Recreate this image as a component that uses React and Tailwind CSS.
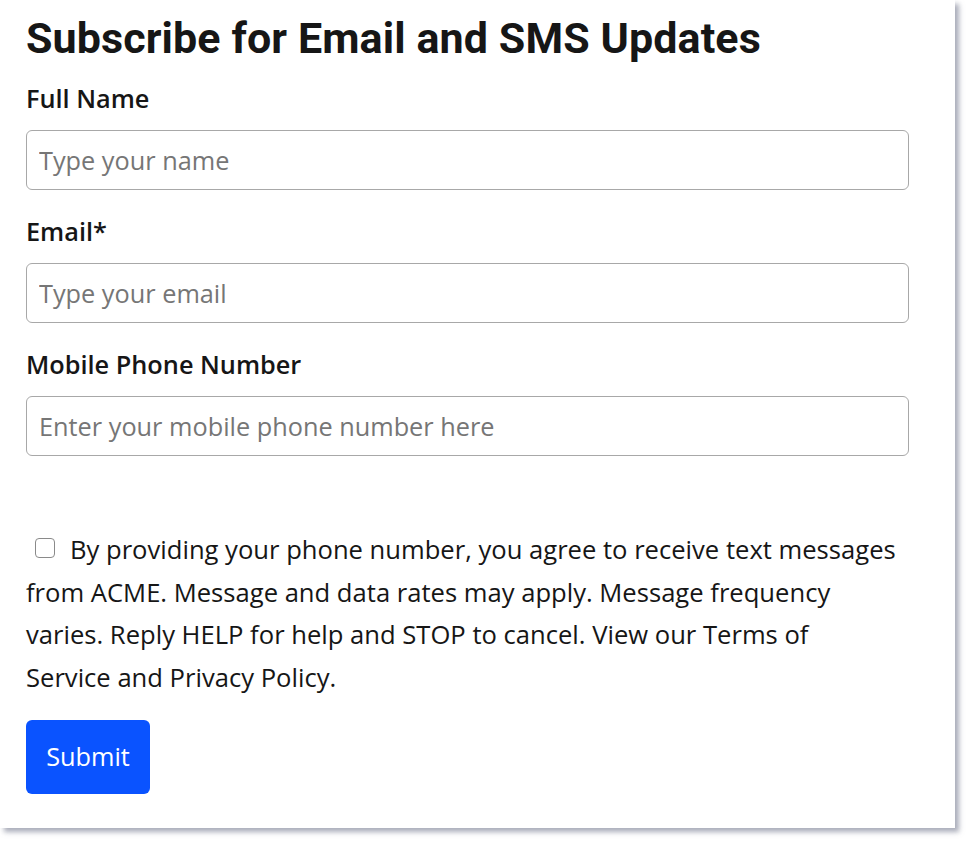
import React, { useState } from 'react';

const fields = [
  { id: 'full_name', label: 'Full Name', placeholder: 'Type your name', type: 'text' },
  { id: 'email', label: 'Email*', placeholder: 'Type your email', type: 'email' },
  { id: 'phone', label: 'Mobile Phone Number', placeholder: 'Enter your mobile phone number here', type: 'tel' },
];

export default function App() {
  const [form, setForm] = useState({ full_name: '', email: '', phone: '' });
  const [agree, setAgree] = useState(false);

  const handleChange = event => {
    const { name, value } = event.target;
    setForm(prev => ({ ...prev, [name]: value }));
  };

  return (
    <div className="min-h-screen bg-white font-['Open_Sans',sans-serif] text-[#161616]">
      <div className="w-[955px] h-[828px] bg-white shadow-[4px_4px_5px_rgba(100,105,130,0.55)] pl-[26px] pr-[46px] pt-[13px]">
        <h1 className="font-['Roboto',sans-serif] text-[43px] leading-[50px] font-bold tracking-[0.1px]">
          Subscribe for Email and SMS Updates
        </h1>

        <form onSubmit={e => e.preventDefault()} className="mt-[20px]">
          {fields.map((field, i) => (
            <div key={field.id} className={i > 0 ? 'mt-[26px]' : ''}>
              <label htmlFor={field.id} className="block text-[25.3px] leading-[30px] font-semibold">
                {field.label}
              </label>
              <input
                id={field.id}
                name={field.id}
                type={field.type}
                value={form[field.id]}
                onChange={handleChange}
                placeholder={field.placeholder}
                className="mt-[17px] block w-full h-[60px] px-[12px] text-[25.3px] border border-[#a8a8a8] rounded-[6px] placeholder:text-[#767676] focus:outline-none"
              />
            </div>
          ))}

          <p className="mt-[73px] mr-[10px] text-[25.6px] leading-[42.5px]">
            <input
              type="checkbox"
              checked={agree}
              onChange={() => setAgree(prev => !prev)}
              className="appearance-none inline-block align-[1px] w-[20px] h-[20px] ml-[9px] mr-[15px] border-[1.5px] border-[#8a8a8a] rounded-[4px] bg-white checked:bg-[#0a53ff]"
            />
            By providing your phone number, you agree to receive text messages from ACME. Message and data rates may apply. Message frequency varies. Reply HELP for help and STOP to cancel. View our Terms of Service and Privacy Policy.
          </p>

          <button
            type="submit"
            className="mt-[21px] w-[124px] h-[74px] rounded-[6px] bg-[#0a53ff] text-white text-[25.3px] font-medium"
          >
            Submit
          </button>
        </form>
      </div>
    </div>
  );
}
